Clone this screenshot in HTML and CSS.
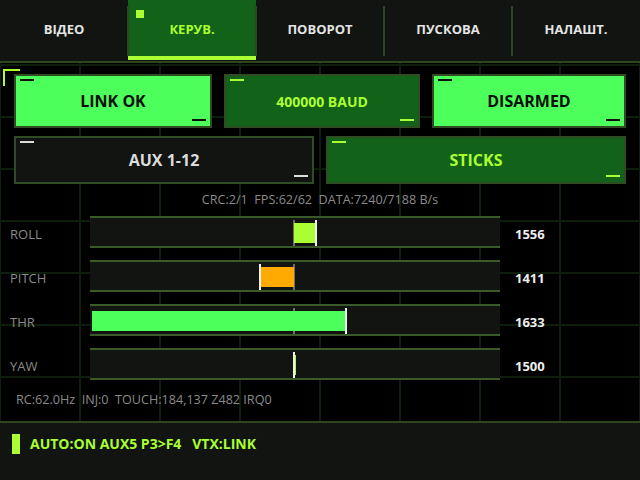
FILE: index.html
```html
<!DOCTYPE html>
<html lang="uk">
<head>
<meta charset="utf-8">
<title>КЕРУВ.</title>
<link rel="stylesheet" href="styles.css">
</head>
<body>
<div class="screen">
  <header class="tabs">
    <div class="tab">ВІДЕО</div>
    <div class="tab active"><span class="tab-mark"></span>КЕРУВ.</div>
    <div class="tab">ПОВОРОТ</div>
    <div class="tab">ПУСКОВА</div>
    <div class="tab">НАЛАШТ.</div>
  </header>

  <main class="panel">
    <span class="corner"></span>
    <div class="btn-grid row-3">
      <div class="btn bright">LINK OK<i class="tick tl"></i><i class="tick br"></i></div>
      <div class="btn dark-green small">400000 BAUD<i class="tick tl"></i><i class="tick br"></i></div>
      <div class="btn bright">DISARMED<i class="tick tl"></i><i class="tick br"></i></div>
    </div>
    <div class="btn-grid row-2">
      <div class="btn plain">AUX 1-12<i class="tick tl"></i><i class="tick br"></i></div>
      <div class="btn dark-green">STICKS<i class="tick tl"></i><i class="tick br"></i></div>
    </div>

    <div class="status">CRC:2/1  FPS:62/62  DATA:7240/7188 B/s</div>

    <div class="channels">
      <div class="ch">
        <span class="ch-label">ROLL</span>
        <div class="track">
          <span class="center-mark"></span>
          <span class="fill lime" style="left:204px;width:21px"></span>
          <span class="val-mark" style="left:225px"></span>
        </div>
        <span class="ch-val">1556</span>
      </div>
      <div class="ch">
        <span class="ch-label">PITCH</span>
        <div class="track">
          <span class="center-mark"></span>
          <span class="fill orange" style="left:170px;width:34px"></span>
          <span class="val-mark" style="left:169px"></span>
        </div>
        <span class="ch-val">1411</span>
      </div>
      <div class="ch">
        <span class="ch-label">THR</span>
        <div class="track">
          <span class="center-mark"></span>
          <span class="fill green" style="left:2px;width:254px"></span>
          <span class="val-mark" style="left:255px"></span>
        </div>
        <span class="ch-val">1633</span>
      </div>
      <div class="ch">
        <span class="ch-label">YAW</span>
        <div class="track">
          <span class="center-mark"></span>
          <span class="fill lime" style="left:205px;width:1px"></span>
          <span class="val-mark" style="left:203px"></span>
        </div>
        <span class="ch-val">1500</span>
      </div>
    </div>

    <div class="info">RC:62.0Hz  INJ:0  TOUCH:184,137 Z482 IRQ0</div>
  </main>

  <footer class="footer">
    <span class="ind"></span>
    <span class="foot-text">AUTO:ON AUX5 P3&gt;F4   VTX:LINK</span>
  </footer>
</div>
</body>
</html>
```

FILE: styles.css
```css
* { box-sizing: border-box; }

html, body {
  margin: 0;
  padding: 0;
}

body {
  width: 640px;
  height: 480px;
  overflow: hidden;
  background-color: #000;
  background-image:
    linear-gradient(to right, #0d1e0d 2px, transparent 2px),
    linear-gradient(to bottom, #0d1e0d 2px, transparent 2px);
  background-size: 80px 52px;
  background-position: -1px 12px;
  font-family: "Open Sans", "Noto Sans", sans-serif;
  color: #e6e6e6;
}

.screen {
  width: 640px;
  height: 480px;
  display: flex;
  flex-direction: column;
}

/* ---------- tabs ---------- */
.tabs {
  height: 63px;
  background: #111411;
  border-bottom: 2px solid #2c471f;
  display: grid;
  grid-template-columns: repeat(5, 1fr);
  align-items: start;
}

.tab {
  position: relative;
  height: 60px;
  padding-top: 2px;
  padding-bottom: 4px;
  display: flex;
  align-items: center;
  justify-content: center;
  font-weight: 700;
  font-size: 13px;
  color: #e4e4e4;
}

.tab + .tab::before {
  content: "";
  position: absolute;
  left: -1px;
  top: 6px;
  bottom: 4px;
  width: 2px;
  background: #2c471f;
}

.tab.active {
  background: #13621a;
  color: #aaff33;
  border-bottom: 4px solid #aaff33;
  padding-bottom: 0;
}

.tab.active::after {
  content: "";
  position: absolute;
  right: -1px;
  top: 6px;
  bottom: 0;
  width: 2px;
  background: #2c471f;
  z-index: 1;
}

.tab.active::before {
  bottom: 0;
  z-index: 1;
}

.tab-mark {
  position: absolute;
  left: 8px;
  top: 10px;
  width: 8px;
  height: 8px;
  background: #aaff33;
}

/* ---------- panel ---------- */
.panel {
  position: relative;
  flex: 1;
  padding-top: 11px;
  display: flex;
  flex-direction: column;
}

.corner {
  position: absolute;
  left: 3px;
  top: 6px;
  width: 17px;
  height: 17px;
  border-left: 2px solid #aaff33;
  border-top: 2px solid #aaff33;
}

.btn-grid {
  display: grid;
  gap: 12px;
  padding: 0 14px;
}

.row-3 {
  grid-template-columns: 198px 196px 194px;
  height: 54px;
}

.row-2 {
  grid-template-columns: 1fr 1fr;
  height: 48px;
  margin-top: 8px;
}

.btn {
  position: relative;
  border: 2px solid #2f4c22;
  display: flex;
  align-items: center;
  justify-content: center;
  font-weight: 700;
  font-size: 16px;
}

.btn.small { font-size: 14px; }

.btn.bright { background: #4dff5a; color: #0a0f0a; }
.btn.dark-green { background: #13621a; color: #aaff33; }
.btn.plain { background: #111411; color: #dcdcdc; }

.tick {
  position: absolute;
  width: 14px;
  height: 2px;
}

.tick.tl { left: 4px; top: 3px; }
.tick.br { right: 4px; bottom: 5px; }

.bright .tick { background: #0a0f0a; }
.dark-green .tick { background: #aaff33; }
.plain .tick { background: #dcdcdc; }

/* ---------- status ---------- */
.status {
  height: 32px;
  line-height: 32px;
  text-align: center;
  white-space: pre;
  font-size: 12.6px;
  color: #8a8a8a;
}

/* ---------- channels ---------- */
.channels {
  display: flex;
  flex-direction: column;
  gap: 12px;
}

.ch {
  display: grid;
  grid-template-columns: 90px 410px 1fr;
  align-items: center;
  height: 32px;
}

.ch-label {
  padding-left: 10px;
  padding-top: 4px;
  font-size: 13px;
  color: #8a8a8a;
}

.ch-val {
  padding-left: 15px;
  padding-top: 4px;
  font-size: 13px;
  font-weight: 700;
  color: #eeeeee;
}

.track {
  position: relative;
  height: 32px;
  background: #111411;
  border-top: 2px solid #3a5a2a;
  border-bottom: 2px solid #3a5a2a;
}

.center-mark {
  position: absolute;
  left: 203px;
  top: 2px;
  bottom: 0;
  width: 2px;
  background: #6e6e6e;
}

.fill {
  position: absolute;
  top: 5px;
  height: 20px;
}

.fill.lime { background: #aaff33; }
.fill.orange { background: #ffaa00; }
.fill.green { background: #4dff5a; }

.val-mark {
  position: absolute;
  top: 2px;
  bottom: 0;
  width: 2px;
  background: #f0f0f0;
}

/* ---------- info ---------- */
.info {
  height: 40px;
  line-height: 40px;
  padding-left: 16px;
  white-space: pre;
  font-size: 12.6px;
  color: #8a8a8a;
}

/* ---------- footer ---------- */
.footer {
  height: 59px;
  background: #111411;
  border-top: 2px solid #2c471f;
  padding: 11px 0 0 12px;
  display: flex;
  align-items: flex-start;
  gap: 10px;
}

.ind {
  width: 8px;
  height: 20px;
  background: #aaff33;
}

.foot-text {
  height: 20px;
  line-height: 20px;
  white-space: pre;
  font-size: 14px;
  font-weight: 700;
  color: #aaff33;
}
```
